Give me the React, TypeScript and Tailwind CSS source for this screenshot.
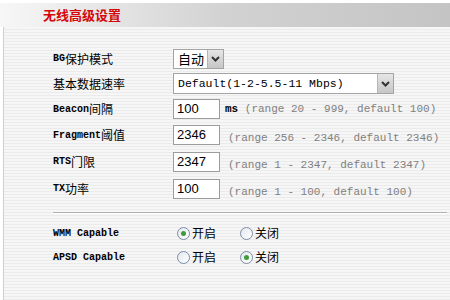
import type { ReactNode } from "react";

const CJK = "font-['Noto_Sans_CJK_SC',sans-serif]";
const MONO = "font-['Liberation_Mono','Noto_Sans_CJK_SC',monospace]";

// Split label text into ascii (narrow bold mono) and CJK runs, like the old SimSun rendering
function Label({ text }: { text: string }) {
  const parts = text.match(/[\x00-\x7f]+|[^\x00-\x7f]+/g) ?? [];
  return (
    <div className="flex items-center text-black">
      {parts.map((p, i) =>
        /^[\x00-\x7f]+$/.test(p) ? (
          <span key={i} className={`${MONO} whitespace-pre text-[10px] font-bold`}>
            {p}
          </span>
        ) : (
          <span key={i} className={`${CJK} text-[12px]`}>
            {p}
          </span>
        ),
      )}
    </div>
  );
}

function DropButton() {
  return (
    <div className="flex h-full w-[16px] items-center justify-center border-l border-[#b4b4b4] bg-gradient-to-b from-[#e6e6e6] to-[#c6c6c6]">
      <svg width="9" height="6" viewBox="0 0 9 6">
        <polyline points="1,1 4.5,4.5 8,1" fill="none" stroke="#333" strokeWidth="2" />
      </svg>
    </div>
  );
}

function Input({ value }: { value: string }) {
  return (
    <div className="flex h-[20px] w-[47px] items-center border border-[#9c9c9c] bg-white pl-[3px] font-['Liberation_Sans',sans-serif] text-[13px] text-black">
      {value}
    </div>
  );
}

function Hint({ children }: { children: ReactNode }) {
  return <span className={`${MONO} whitespace-pre text-[11px] text-[#808080]`}>{children}</span>;
}

function Radio({ checked, label }: { checked: boolean; label: string }) {
  return (
    <div className="flex items-center">
      <div className="flex h-[13px] w-[13px] items-center justify-center rounded-full border border-[#7c8ea6] bg-gradient-to-br from-[#e4e8ee] to-white">
        {checked && <div className="h-[5px] w-[5px] rounded-full bg-[#3f9b3a]" />}
      </div>
      <span className={`${CJK} ml-[2px] text-[12px] text-black`}>{label}</span>
    </div>
  );
}

function Row({ h, label, children }: { h: string; label: string; children: ReactNode }) {
  return (
    <div className={`grid grid-cols-[120px_1fr] items-center ${h}`}>
      <Label text={label} />
      <div className="flex items-center">{children}</div>
    </div>
  );
}

export default function App() {
  return (
    <div className="flex h-[300px] w-[450px] flex-col overflow-hidden bg-white">
      {/* title band */}
      <div className="mt-[3px] flex h-[24px] shrink-0 items-center bg-gradient-to-r from-[#f7f7f7] via-[#d2d2d2] to-[#c4c4c4] pl-[43px]">
        <span className={`${CJK} text-[13px] font-bold text-[#d40808]`}>无线高级设置</span>
      </div>

      {/* striped panel */}
      <div className="ml-[3px] flex-1 border-l border-[#cfcfcf] bg-[repeating-linear-gradient(to_bottom,#f6f6f6_0px,#f6f6f6_2px,#ebebeb_2px,#ebebeb_3px)] pl-[49px] pt-[19px]">
        <Row h="h-[25px]" label="BG保护模式">
          <div className="flex h-[20px] w-[51px] items-center border border-[#a4a4a4] bg-white">
            <span className={`${CJK} flex-1 pl-[4px] text-[13px] text-black`}>自动</span>
            <DropButton />
          </div>
        </Row>
        <Row h="h-[25px]" label="基本数据速率">
          <div className="flex h-[21px] w-[221px] items-center border border-[#a4a4a4] bg-white">
            <span className={`${MONO} flex-1 whitespace-pre pl-[4px] text-[11.5px] text-black`}>
              Default(1-2-5.5-11 Mbps)
            </span>
            <DropButton />
          </div>
        </Row>
        <Row h="h-[26px]" label="Beacon间隔">
          <Input value="100" />
          <span className={`${MONO} ml-[5px] whitespace-pre text-[11px] font-bold text-black`}>ms </span>
          <Hint>(range 20 - 999, default 100)</Hint>
        </Row>
        <Row h="h-[26px]" label="Fragment阈值">
          <Input value="2346" />
          <span className="ml-[8px]">
            <Hint>(range 256 - 2346, default 2346)</Hint>
          </span>
        </Row>
        <Row h="h-[27px]" label="RTS门限">
          <Input value="2347" />
          <span className="ml-[8px]">
            <Hint>(range 1 - 2347, default 2347)</Hint>
          </span>
        </Row>
        <Row h="h-[27px]" label="TX功率">
          <Input value="100" />
          <span className="ml-[8px]">
            <Hint>(range 1 - 100, default 100)</Hint>
          </span>
        </Row>

        <div className="mr-[3px] mt-[10px] border-b border-t border-b-white border-t-[#b0b0b0]" />

        <div className="mt-[7px]">
          <Row h="h-[24px]" label="WMM Capable">
            <div className="ml-[4px] flex items-center gap-[24px]">
              <Radio checked label="开启" />
              <Radio checked={false} label="关闭" />
            </div>
          </Row>
          <Row h="h-[24px]" label="APSD Capable">
            <div className="ml-[4px] flex items-center gap-[24px]">
              <Radio checked={false} label="开启" />
              <Radio checked label="关闭" />
            </div>
          </Row>
        </div>
      </div>
    </div>
  );
}
